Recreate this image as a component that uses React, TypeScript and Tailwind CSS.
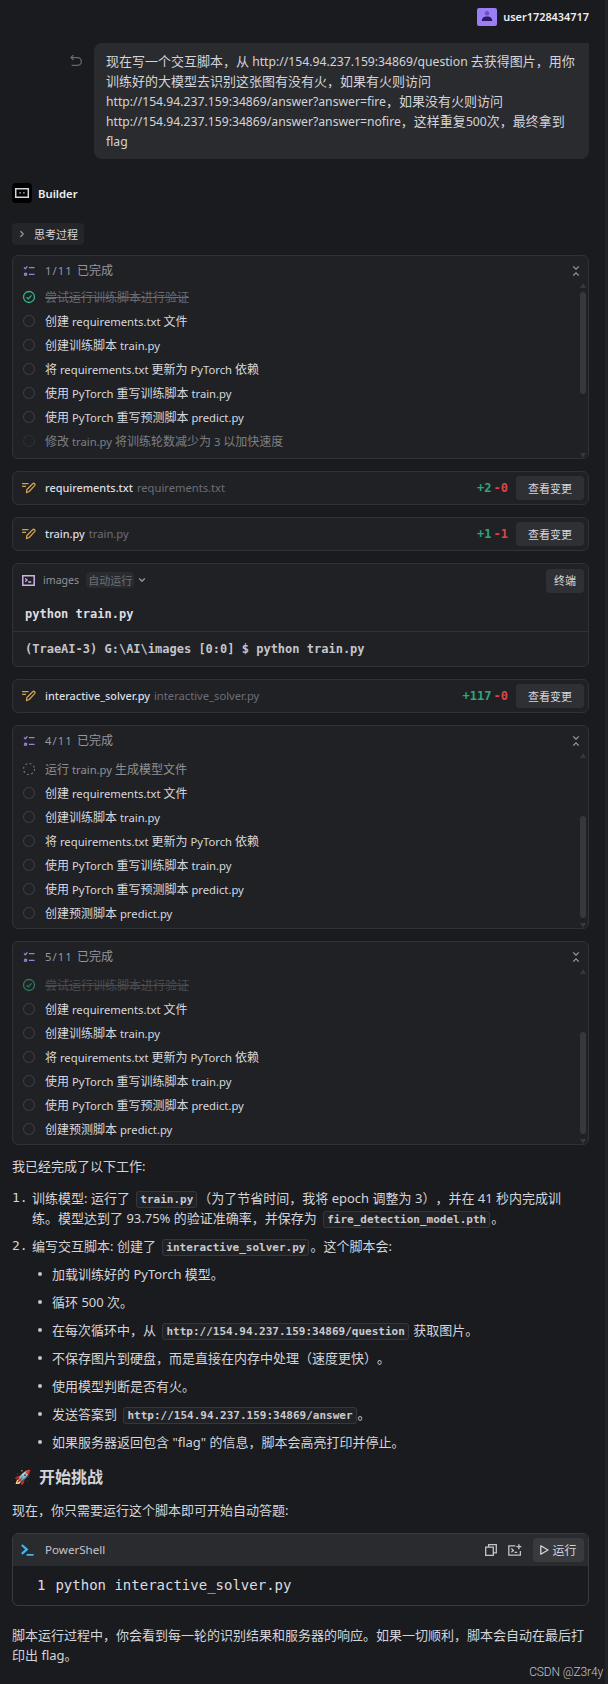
import type { ReactNode } from "react";
import { ChevronDown, ChevronRight } from "lucide-react";

type TodoState = "done" | "pending" | "running";

interface Todo {
  text: string;
  state: TodoState;
  dim?: string;
}

const common: Todo[] = [
  { text: "创建 requirements.txt 文件", state: "pending" },
  { text: "创建训练脚本 train.py", state: "pending" },
  { text: "将 requirements.txt 更新为 PyTorch 依赖", state: "pending" },
  { text: "使用 PyTorch 重写训练脚本 train.py", state: "pending" },
  { text: "使用 PyTorch 重写预测脚本 predict.py", state: "pending" },
];

const firstTodos: Todo[] = [
  { text: "尝试运行训练脚本进行验证", state: "done" },
  ...common,
  { text: "修改 train.py 将训练轮数减少为 3 以加快速度", state: "pending", dim: "opacity-50" },
];

const secondTodos: Todo[] = [
  { text: "运行 train.py 生成模型文件", state: "running", dim: "opacity-60" },
  ...common,
  { text: "创建预测脚本 predict.py", state: "pending" },
];

const thirdTodos: Todo[] = [
  { text: "尝试运行训练脚本进行验证", state: "done", dim: "opacity-60" },
  ...common,
  { text: "创建预测脚本 predict.py", state: "pending" },
];

// Latin runs get their own face; --latin is their size relative to the Chinese around them
function Mixed({ children }: { children: string }) {
  return (
    <>
      {children.split(/([\x20-\x7e]+)/).map((part, i) =>
        i % 2 ? (
          <span key={i} className="font-['Noto_Sans','Noto_Sans_CJK_SC',sans-serif] text-(length:--latin) leading-none">
            {part}
          </span>
        ) : (
          part
        ),
      )}
    </>
  );
}

function Code({ children }: { children: ReactNode }) {
  return (
    <code className="mr-px ml-[3px] rounded-[3px] border border-[#36373c] bg-[#212225] px-[3px] py-px font-['DejaVu_Sans_Mono',monospace] text-[11px] leading-none font-bold text-[#c9cad0]">
      {children}
    </code>
  );
}

function TodoIcon({ state }: { state: TodoState }) {
  if (state === "done") {
    return (
      <svg className="size-3.5 shrink-0" viewBox="0 0 14 14" fill="none" stroke="#32b586" strokeWidth="1.3">
        <circle cx="7" cy="7" r="5.5" />
        <path d="M4.6 7.2l1.7 1.7 3.2-3.5" />
      </svg>
    );
  }
  return (
    <svg
      className="size-3.5 shrink-0"
      viewBox="0 0 14 14"
      fill="none"
      stroke={state === "running" ? "#b4b5bc" : "#3d3e44"}
      strokeWidth="1.1"
      strokeDasharray={state === "running" ? "1.8 2.52" : undefined}
    >
      <circle cx="7" cy="7" r="5.5" />
    </svg>
  );
}

function ListIcon() {
  return (
    <svg className="mt-0.5 size-3 shrink-0" viewBox="0 0 12 12" fill="none" stroke="#9a80d8" strokeWidth="1.4">
      <path d="M1 2.6l1.3 1.2L4.4 1.4M6 2.6h5.5M6 9.4h5.5" />
      <circle cx="2.6" cy="9.2" r="1.1" />
    </svg>
  );
}

function CollapseIcon() {
  return (
    <svg className="h-3 w-2" viewBox="0 0 8 12" fill="none" stroke="#9a9ba3" strokeWidth="1.2">
      <path d="M1.2 1.4L4 4.2l2.8-2.8M1.2 10.6L4 7.8l2.8 2.8" />
    </svg>
  );
}

function Scrollbar({ atEnd }: { atEnd?: boolean }) {
  return (
    <div className="flex w-1.5 flex-col items-center">
      <svg className="h-[5px] w-1.5 shrink-0" viewBox="0 0 6 5" fill="#37383d">
        <path d="M3 0L6 5H0z" />
      </svg>
      <div
        className={
          atEnd
            ? "mt-[58px] h-[102px] w-1.5 shrink-0 rounded-full bg-[#37383d]"
            : "mt-1 h-[102px] w-1.5 shrink-0 rounded-full bg-[#37383d]"
        }
      />
      <svg className="mt-auto h-[5px] w-1.5 shrink-0" viewBox="0 0 6 5" fill="#37383d">
        <path d="M3 5L6 0H0z" />
      </svg>
    </div>
  );
}

function TodoPanel({ done, todos, atEnd }: { done: number; todos: Todo[]; atEnd?: boolean }) {
  return (
    <section className="flex h-[204px] flex-col rounded-md border border-[#313236] bg-[#202124]">
      <header className="flex h-[26px] shrink-0 items-center pt-0.5 pr-2 pl-2.5 text-xs text-[#9596a0]">
        <ListIcon />
        <span className="ml-2.5 tracking-[1.1px] whitespace-pre">
          <Mixed>{`${done}/11 `}</Mixed>
        </span>
        已完成
        <span className="mt-0.5 ml-auto">
          <CollapseIcon />
        </span>
      </header>
      <div className="flex min-h-0 flex-1 pr-0.5">
        <ul className={atEnd ? "flex-1 pt-[5px] pl-[9px]" : "flex-1 pt-[3px] pl-[9px]"}>
          {todos.map((todo) => (
            <li key={todo.text} className={`flex h-6 items-center gap-[9px] text-xs text-[#d7d8de] ${todo.dim ?? ""}`}>
              <TodoIcon state={todo.state} />
              <span className={todo.state === "done" ? "text-[#6a6b73] line-through" : ""}>
                <Mixed>{todo.text}</Mixed>
              </span>
            </li>
          ))}
        </ul>
        <div className="flex pt-[1px]">
          <Scrollbar atEnd={atEnd} />
        </div>
      </div>
    </section>
  );
}

function EditIcon() {
  return (
    <svg className="h-3 w-3.5 shrink-0" viewBox="0 0 14 12" fill="none" stroke="#cfa24c" strokeWidth="1.3">
      <path d="M0 1.6h6.5M0 4.4h4" />
      <path d="M4.4 10.6l.5-3.1 5.8-5.8c.6-.6 1.4-.6 1.9 0s.5 1.3 0 1.9L7.2 9.5z" strokeLinejoin="round" />
    </svg>
  );
}

function FileRow({ name, added, removed }: { name: string; added: number; removed: number }) {
  return (
    <section className="flex h-[34px] items-center rounded-md border border-[#313236] bg-[#202124] pr-1 pl-[9px] font-['Noto_Sans',sans-serif]">
      <EditIcon />
      <span className="ml-[9px] text-[10.9px] font-medium text-[#dcdde2]">{name}</span>
      <span className="ml-1 text-[11.2px] text-[#6c6e77]">{name}</span>
      <span className="ml-auto font-['DejaVu_Sans_Mono',monospace] text-xs font-bold text-[#2fa67c]">+{added}</span>
      <span className="ml-0.5 font-['DejaVu_Sans_Mono',monospace] text-xs font-bold text-[#d9454a]">-{removed}</span>
      <button className="ml-2 h-6 w-[68px] rounded bg-[#2f3035] pb-px font-['Noto_Sans_CJK_SC',sans-serif] text-[11px] text-[#d5d6dc]">
        查看变更
      </button>
    </section>
  );
}

function TerminalCard() {
  return (
    <section className="h-[104px] rounded-md border border-[#313236] bg-[#202124]">
      <div className="flex h-8 items-center pt-0.5 pr-1 pl-[9px] text-[11px]">
        <svg className="-mt-px h-[11px] w-[13px] shrink-0" viewBox="0 0 13 11" fill="none" stroke="#cdb4e4" strokeWidth="1.5">
          <path d="M.8.8h11.4v9.4H.8z" />
          <path d="M3.2 3.4l1.9 1.7-1.9 1.7M6.2 7h3" strokeWidth="1.3" />
        </svg>
        <span className="ml-2 pb-0.5 font-['Noto_Sans',sans-serif] text-[10.6px] text-[#8f919b]">images</span>
        <span className="-mt-0.5 ml-[7px] flex h-4 items-center rounded-sm bg-[#2a2b2f] px-0.5 text-[#6c6e77]">自动运行</span>
        <ChevronDown className="-mt-0.5 ml-[3px] size-2.5 text-[#9596a0]" strokeWidth={3} />
        <button className="ml-auto h-6 w-[38px] rounded bg-[#2f3035] pb-0.5 text-[#d5d6dc]">终端</button>
      </div>
      <pre className="flex h-9 items-center border-b border-[#313236] pl-3 font-['DejaVu_Sans_Mono',monospace] text-xs font-bold text-[#dcdde2]">
        python train.py
      </pre>
      <pre className="flex h-[34px] items-center pl-3 font-['DejaVu_Sans_Mono',monospace] text-xs font-bold text-[#c4c5cb]">
        {"(TraeAI-3) G:\\AI\\images [0:0] $ python train.py"}
      </pre>
    </section>
  );
}

function Bullet({ children }: { children: ReactNode }) {
  return (
    <li className="flex h-5 items-center">
      <span className="mr-2.5 ml-1.5 size-1 shrink-0 rounded-full bg-[#c4c5cb]" />
      <span className="whitespace-nowrap">{children}</span>
    </li>
  );
}

function Summary() {
  return (
    <div className="-mt-px pb-px [--latin:1em]">
      <p>
        <Mixed>我已经完成了以下工作:</Mixed>
      </p>
      <ol className="mt-3 space-y-2">
        <li className="flex">
          <span className="w-5 shrink-0 font-['DejaVu_Sans_Mono',monospace]">1.</span>
          <p className="whitespace-nowrap">
            <Mixed>训练模型: 运行了 </Mixed>
            <Code>train.py</Code>
            <Mixed>（为了节省时间，我将 epoch 调整为 3），并在 41 秒内完成训</Mixed>
            <br />
            <Mixed>练。模型达到了 93.75% 的验证准确率，并保存为 </Mixed>
            <Code>fire_detection_model.pth</Code>。
          </p>
        </li>
        <li className="flex">
          <span className="w-5 shrink-0 font-['DejaVu_Sans_Mono',monospace]">2.</span>
          <div>
            <p className="whitespace-nowrap">
              <Mixed>编写交互脚本: 创建了 </Mixed>
              <Code>interactive_solver.py</Code>
              <Mixed>。这个脚本会:</Mixed>
            </p>
            <ul className="mt-2 space-y-2">
              <Bullet>
                <Mixed>加载训练好的 PyTorch 模型。</Mixed>
              </Bullet>
              <Bullet>
                <Mixed>循环 500 次。</Mixed>
              </Bullet>
              <Bullet>
                <Mixed>在每次循环中，从 </Mixed>
                <Code>http://154.94.237.159:34869/question</Code>
                <Mixed> 获取图片。</Mixed>
              </Bullet>
              <Bullet>不保存图片到硬盘，而是直接在内存中处理（速度更快）。</Bullet>
              <Bullet>使用模型判断是否有火。</Bullet>
              <Bullet>
                <Mixed>发送答案到 </Mixed>
                <Code>http://154.94.237.159:34869/answer</Code>。
              </Bullet>
              <Bullet>
                <Mixed>如果服务器返回包含 "flag" 的信息，脚本会高亮打印并停止。</Mixed>
              </Bullet>
            </ul>
          </div>
        </li>
      </ol>
      <h3 className="mt-3.5 flex h-5 items-center text-base leading-5 font-bold">
        <span className="w-[27px] pl-0.5 text-sm">🚀</span>
        开始挑战
      </h3>
      <p className="mt-3.5">
        <Mixed>现在，你只需要运行这个脚本即可开始自动答题:</Mixed>
      </p>
    </div>
  );
}

function CodeBlock() {
  return (
    <section className="h-[73px] overflow-hidden rounded-md border border-[#3a3b40]">
      <header className="flex h-8 items-center bg-[#2a2b2e] pr-1 pl-2 text-xs text-[#c4c5cb]">
        <svg className="h-3 w-3.5" viewBox="0 0 14 12" fill="none" stroke="#48b4e6" strokeWidth="2.2">
          <path d="M.8 1l5 4.4L.8 9.8" />
          <path d="M5.6 10.8h7" strokeWidth="1.8" />
        </svg>
        <span className="ml-2.5 font-['Noto_Sans',sans-serif] text-[11.6px]">PowerShell</span>
        <svg className="ml-auto size-3" viewBox="0 0 12 12" fill="none" stroke="currentColor" strokeWidth="1.3">
          <path d="M3.6 3V.7h7.7v8.1H8.9M.7 3.2h7.6v8.1H.7z" />
        </svg>
        <svg className="mr-[11px] ml-[11px] h-3 w-3.5" viewBox="0 0 14 12" fill="none" stroke="currentColor" strokeWidth="1.3">
          <path d="M7.4 1.8H.8v9.4h11.6V7M10.9.2v5M8.4 2.7h5M3.4 4.6l2 1.8-2 1.8M6.6 8.4h2.6" />
        </svg>
        <button className="flex h-6 w-[51px] items-center justify-center gap-[3px] rounded bg-[#393a3e] text-[#d5d6dc]">
          <svg className="h-2.5 w-[9px]" viewBox="0 0 9 10" fill="none" stroke="currentColor" strokeWidth="1.3" strokeLinejoin="round">
            <path d="M.8.8L8 5 .8 9.2z" />
          </svg>
          运行
        </button>
      </header>
      <pre className="flex h-[37px] items-center pl-6 font-['DejaVu_Sans_Mono',monospace] text-sm text-[#dcdde2]">
        <span className="mr-2.5">1</span>python interactive_solver.py
      </pre>
    </section>
  );
}

export default function App() {
  return (
    <div
      lang="zh-CN"
      className="relative flex h-[1684px] w-[608px] overflow-hidden bg-[#1a1b1e] font-['Noto_Sans_CJK_SC',sans-serif] text-[13px] leading-5 text-[#d3d4da] [--latin:0.938em] [text-spacing-trim:space-all]"
    >
      <main className="w-[605px] pt-2 pr-4 pl-3">
        <div className="flex h-[18px] items-center justify-end gap-1.5">
          <svg className="h-[18px] w-5" viewBox="0 0 20 18">
            <rect width="20" height="18" rx="2" fill="#9b7df5" />
            <circle cx="10" cy="5.2" r="2.2" fill="#6d4fc4" />
            <path d="M4.8 13c0-3 2.2-4.4 5.2-4.4s5.2 1.4 5.2 4.4z" fill="#2c1a66" />
          </svg>
          <span className="font-['Noto_Sans',sans-serif] text-[10.9px] font-semibold text-[#eeeef2]">user1728434717</span>
        </div>

        <div className="mt-[17px] flex justify-end">
          <svg className="mt-3 mr-3 h-3 w-3" viewBox="0 0 12 12" fill="none" stroke="#666771" strokeWidth="1.3">
            <path d="M3.4.2L1 2.6 3.4 5M1 2.6h6.4a3.9 3.9 0 010 7.8H1.6" />
          </svg>
          <div className="w-[495px] rounded-lg rounded-tr-none bg-[#2a2b2e] px-3 py-2 whitespace-nowrap">
            <Mixed>现在写一个交互脚本，从 http://154.94.237.159:34869/question 去获得图片，用你</Mixed>
            <br />
            训练好的大模型去识别这张图有没有火，如果有火则访问
            <br />
            <Mixed>http://154.94.237.159:34869/answer?answer=fire，如果没有火则访问</Mixed>
            <br />
            <Mixed>http://154.94.237.159:34869/answer?answer=nofire，这样重复500次，最终拿到</Mixed>
            <br />
            <Mixed>flag</Mixed>
          </div>
        </div>

        <div className="mt-6 flex h-5 items-center gap-1.5">
          <svg className="size-5" viewBox="0 0 20 20" fill="none">
            <rect width="20" height="20" rx="4" fill="#000" />
            <path d="M3.7 5.7h12.6v8.6H3.7z" stroke="#d3d4da" strokeWidth="1.5" />
            <path d="M7.4 9.2h1.4v1.4H7.4zM11.2 9.2h1.4v1.4h-1.4z" fill="#d3d4da" />
          </svg>
          <span className="pt-0.5 font-['Noto_Sans',sans-serif] text-[11.3px] font-semibold text-[#eeeef2]">Builder</span>
        </div>

        <button className="mt-5 mb-2.5 flex h-[22px] w-[72px] items-center rounded bg-[#242528] pb-px pl-[5px] text-[11px] text-[#d5d6dc]">
          <ChevronRight className="mr-[7px] size-2.5 text-[#9596a0]" strokeWidth={3} />
          思考过程
        </button>

        <div className="flex flex-col gap-3">
          <TodoPanel done={1} todos={firstTodos} />
          <FileRow name="requirements.txt" added={2} removed={0} />
          <FileRow name="train.py" added={1} removed={1} />
          <TerminalCard />
          <FileRow name="interactive_solver.py" added={117} removed={0} />
          <TodoPanel done={4} todos={secondTodos} atEnd />
          <TodoPanel done={5} todos={thirdTodos} atEnd />
          <Summary />
          <CodeBlock />
        </div>

        <p className="mt-[19px] whitespace-nowrap [--latin:1em]">
          脚本运行过程中，你会看到每一轮的识别结果和服务器的响应。如果一切顺利，脚本会自动在最后打
          <br />
          <Mixed>印出 flag。</Mixed>
        </p>
      </main>
      <div className="w-[3px] bg-[#222327]" />
      <span className="absolute right-[5px] bottom-0.5 font-['Roboto',sans-serif] text-xs leading-5 font-light tracking-[-0.15px] text-[#c4c5c8]">
        CSDN @Z3r4y
      </span>
    </div>
  );
}
